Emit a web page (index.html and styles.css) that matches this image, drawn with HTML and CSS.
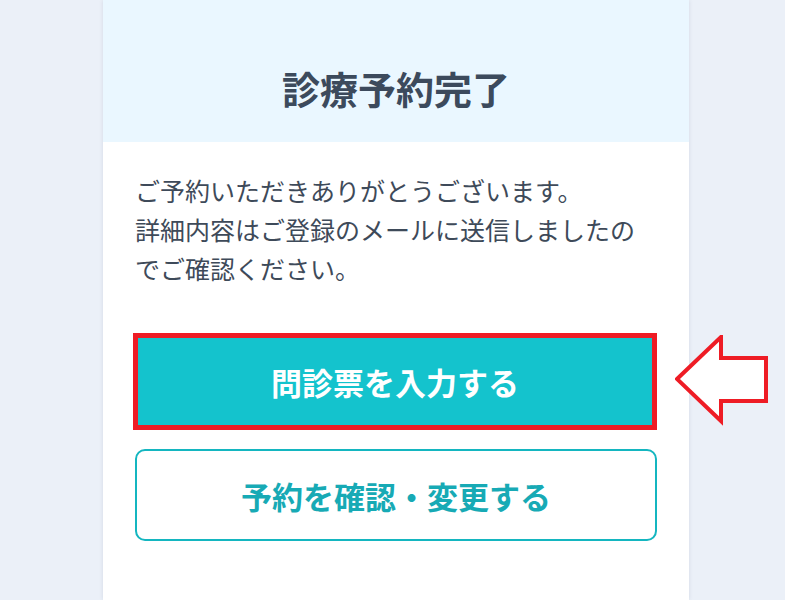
FILE: index.html
```html
<!DOCTYPE html>
<html lang="ja">
<head>
<meta charset="utf-8">
<title>診療予約完了</title>
<link rel="stylesheet" href="styles.css">
</head>
<body>
<main class="card">
  <header class="card-head">
    <h1 class="title">診療予約完了</h1>
  </header>
  <section class="card-body">
    <p class="message">ご予約いただきありがとうございます。<br>詳細内容はご登録のメールに送信しましたのでご確認ください。</p>
    <div class="highlight">
      <a class="btn btn-primary" href="#">問診票を入力する</a>
    </div>
    <a class="btn btn-outline" href="#">予約を確認・変更する</a>
  </section>
</main>
<svg class="arrow" width="100" height="100" viewBox="0 0 100 100" aria-hidden="true">
  <polygon points="2,44 46,2 46,23 91,23 91,66 46,66 46,86" fill="#ffffff" stroke="#ee1c25" stroke-width="4" stroke-linejoin="miter"/>
</svg>
</body>
</html>
```

FILE: styles.css
```css
html, body {
  margin: 0;
  padding: 0;
}
body {
  background: #ebf0f8;
  font-family: "Noto Sans CJK JP", "Noto Sans", sans-serif;
  position: relative;
  min-height: 600px;
  overflow: hidden;
}
.card {
  width: 586px;
  margin-left: 103px;
  min-height: 600px;
  background: #ffffff;
  box-shadow: 0 0 4px rgba(40, 60, 100, 0.12);
}
.card-head {
  background: #eaf7ff;
  padding: 60px 0 26px;
}
.title {
  margin: 0;
  text-align: center;
  font-size: 38px;
  line-height: 56px;
  font-weight: 700;
  color: #3c4a5c;
}
.card-body {
  padding: 29px 32px 40px;
  display: flex;
  flex-direction: column;
}
.message {
  margin: 0 0 45px;
  font-size: 25px;
  line-height: 39px;
  color: #3e4a59;
}
.highlight {
  border: 5px solid #ee1c25;
  margin-left: -2px;
  width: 514px;
  margin-bottom: 19px;
}
.btn {
  display: flex;
  align-items: center;
  justify-content: center;
  text-decoration: none;
  font-weight: 700;
  font-size: 31px;
  box-sizing: border-box;
}
.btn-primary {
  height: 87px;
  background: #14c3cd;
  color: #ffffff;
}
.btn-outline {
  height: 92px;
  border: 2px solid #14b6c0;
  border-radius: 10px;
  color: #17aab5;
  background: #ffffff;
}
.arrow {
  position: absolute;
  left: 675px;
  top: 335px;
}
```
